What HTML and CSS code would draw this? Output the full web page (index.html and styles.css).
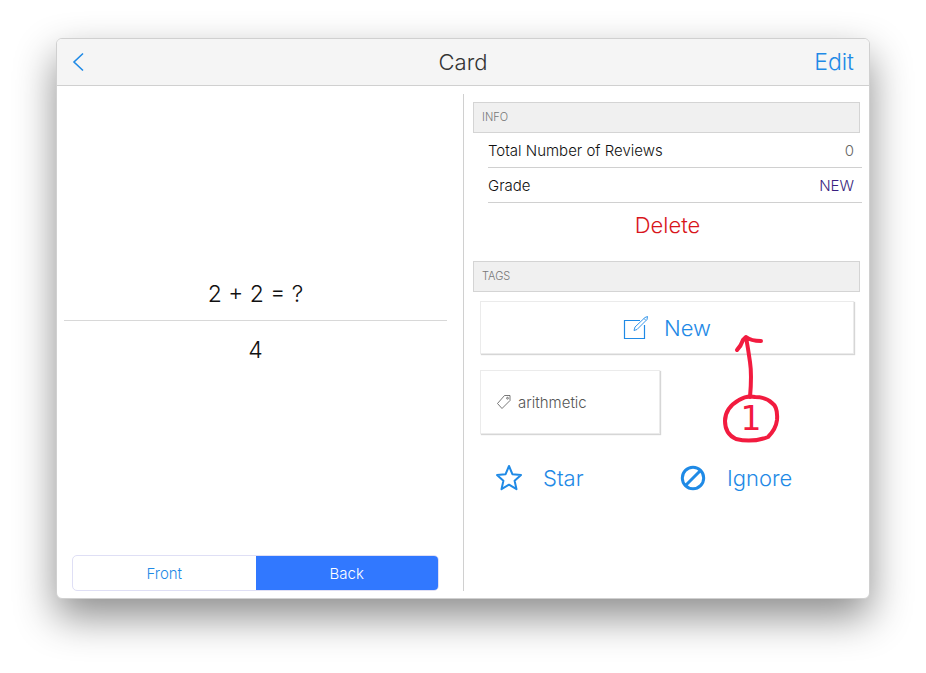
FILE: index.html
```
<!DOCTYPE html>
<html lang="en">
<head>
  <meta charset="UTF-8" />
  <meta name="viewport" content="width=device-width, initial-scale=1.0"/>
  <title>Card</title>

  <link rel="stylesheet" href="styles.css">
</head>
<body>

  <div class="window">
    <header class="navbar">
      <button type="button" class="back" aria-label="Back to deck">
        <svg width="12" height="20" viewBox="0 0 12 20"><path d="M11 1.500 2 10l9 8.500" fill="none" stroke="currentColor" stroke-width="1.600"/></svg>
      </button>
      <h1>Card</h1>
      <button type="button" class="edit">Edit</button>
    </header>

    <main class="panes">
      <!-- Card preview -->
      <section class="preview">
        <div class="question">2 + 2 = ?</div>
        <div class="answer">4</div>
        <div class="segments">
          <button type="button">Front</button>
          <button type="button" class="active">Back</button>
        </div>
      </section>

      <!-- Card details -->
      <section class="details">
        <h2>INFO</h2>
        <dl class="info">
          <div class="row">
            <dt>Total Number of Reviews</dt>
            <dd>0</dd>
          </div>
          <div class="row">
            <dt>Grade</dt>
            <dd class="grade">NEW</dd>
          </div>
        </dl>
        <button type="button" class="delete">Delete</button>

        <h2>TAGS</h2>
        <div class="tags">
          <button type="button" class="tile new-tag">
            <svg width="26" height="26" viewBox="0 0 26 26" fill="none" stroke="currentColor">
              <path d="M17 5.500H1.500v18h20V10" stroke-width="1.200"/>
              <path d="M11 15.500l1-3.500L22 2.500l2.500-1-.5 3L14 14.500zM21 3.500l1.800 1.800" stroke-width=".9"/>
            </svg>
            New
          </button>
          <button type="button" class="tile tag">
            <svg width="16" height="16" viewBox="0 0 16 16" fill="none" stroke="currentColor" stroke-width=".8">
              <path d="M1.500 9.500 8.500 1.500h5.500v5L6 14.500z"/>
              <circle cx="11.500" cy="4.200" r=".9"/>
            </svg>
            arithmetic
          </button>
          <div class="actions">
            <button type="button">
              <svg width="28" height="28" viewBox="0 0 28 28" fill="none" stroke="currentColor" stroke-width="2" stroke-linejoin="round">
                <path d="M14 2l3.400 8.200 8.600.9-6.400 5.700 1.900 8.400L14 20.700l-7.500 4.500 1.900-8.400L2 11.100l8.600-.9z"/>
              </svg>
              Star
            </button>
            <button type="button">
              <svg width="28" height="28" viewBox="0 0 28 28" fill="none" stroke="currentColor" stroke-width="3">
                <circle cx="14" cy="14" r="10.700"/>
                <path d="M6.500 21.500l15-15"/>
              </svg>
              Ignore
            </button>
          </div>

          <!-- Step marker pointing at the New button -->
          <svg class="marker" width="60" height="112" viewBox="0 0 60 112" fill="none" stroke="currentColor" stroke-width="4" stroke-linecap="round" stroke-linejoin="round">
            <path d="M15 18Q19 14 21 8L24 5Q29 9 39 9M24 5Q26 16 28 30Q30 43 28 65"/>
            <path d="M33 65Q25 63 17 68Q3 76 3 89Q3 102 14 107Q30 111 46 105Q54 97 55 88Q56 75 50 71Q44 65 33 65z"/>
            <text x="29" y="98" text-anchor="middle">1</text>
          </svg>
        </div>
      </section>
    </main>
  </div>

</body>
</html>
```
FILE: styles.css
```
* {
  box-sizing: border-box;
}

body {
  margin: 0;
  padding: 38px 56px 74px;
  min-height: 100vh;
  display: flex;
  background: #fff;
  font-family: Inter, "Liberation Sans", sans-serif;
  font-weight: 300;
  font-size: 15px;
  color: #111;
}

button {
  padding: 0;
  border: none;
  background: none;
  font: inherit;
  color: #1f8ae6;
  cursor: pointer;
}

svg {
  display: block;
}

.window {
  flex: 1;
  display: flex;
  flex-direction: column;
  border: 1px solid #d0d0d0;
  border-radius: 6px;
  background: #fff;
  box-shadow: 0 18px 40px rgba(0, 0, 0, 0.45);
}

.navbar {
  display: grid;
  grid-template-columns: 1fr auto 1fr;
  align-items: center;
  height: 47px;
  padding: 0 15px;
  border-bottom: 1px solid #d0d0d0;
  border-radius: 5px 5px 0 0;
  background: #f5f5f5;
}

.navbar h1 {
  margin: 0;
  font-size: 22px;
  font-weight: 300;
  color: #333;
}

.back {
  justify-self: start;
}

.edit {
  justify-self: end;
  font-size: 23px;
}

.panes {
  flex: 1;
  display: grid;
  grid-template-columns: 400fr 398fr;
  padding: 8px 7px 7px;
}

.preview {
  display: flex;
  flex-direction: column;
  padding-right: 16px;
  border-right: 1px solid #d0d0d0;
  text-align: center;
  font-size: 23px;
}

.question,
.answer {
  flex: 1;
  display: flex;
  justify-content: center;
  padding: 12px 0;
}

.question {
  align-items: flex-end;
  border-bottom: 1px solid #d8d8d8;
}

.answer {
  align-items: flex-start;
  padding-top: 15px;
}

.segments {
  display: flex;
  height: 36px;
  margin: 6px 8px 0;
  border: 1px solid #dfdff5;
  border-radius: 5px;
  overflow: hidden;
}

.segments button {
  flex: 1;
  font-size: 15px;
}

.segments .active {
  background: #3178ff;
  color: #fff;
}

.details {
  padding: 8px 0 0 9px;
}

.details h2 {
  margin: 0 2px 0 0;
  padding: 0 8px;
  border: 1px solid #d4d4d4;
  background: #f0f0f0;
  font-size: 11px;
  font-weight: 300;
  line-height: 29px;
  color: #777;
}

.info {
  margin: 0 0 0 15px;
}

.row {
  display: flex;
  justify-content: space-between;
  height: 35px;
  padding-right: 8px;
  border-bottom: 1px solid #d0d0d0;
  line-height: 35px;
}

.row dd {
  margin: 0;
  color: #666;
}

.row .grade {
  color: #3a1f80;
}

.delete {
  display: block;
  width: 100%;
  margin-bottom: 14px;
  font-size: 22px;
  line-height: 44px;
  color: #d8151b;
}

.tags {
  position: relative;
  padding: 9px 8px 0 7px;
}

.tile {
  display: flex;
  align-items: center;
  border: 1px solid #ebebeb;
  background: #fff;
  box-shadow: 1px 1px 1px rgba(0, 0, 0, 0.16);
}

.new-tag {
  justify-content: center;
  gap: 15px;
  width: 100%;
  height: 53px;
  font-size: 22px;
}

.tag {
  gap: 6px;
  width: 48%;
  height: 64px;
  margin-top: 16px;
  padding-left: 15px;
  color: #555;
}

.actions {
  display: grid;
  grid-template-columns: 184fr 190fr;
  margin-top: 24px;
}

.actions button {
  display: flex;
  align-items: center;
  gap: 20px;
  height: 40px;
  padding-left: 15px;
  font-size: 22px;
}

.marker {
  position: absolute;
  top: 40px;
  right: 80px;
  color: #f21b3f;
  pointer-events: none;
}

.marker text {
  fill: currentColor;
  stroke: none;
  font-family: "DejaVu Sans", sans-serif;
  font-size: 33px;
  font-weight: 400;
}
```
